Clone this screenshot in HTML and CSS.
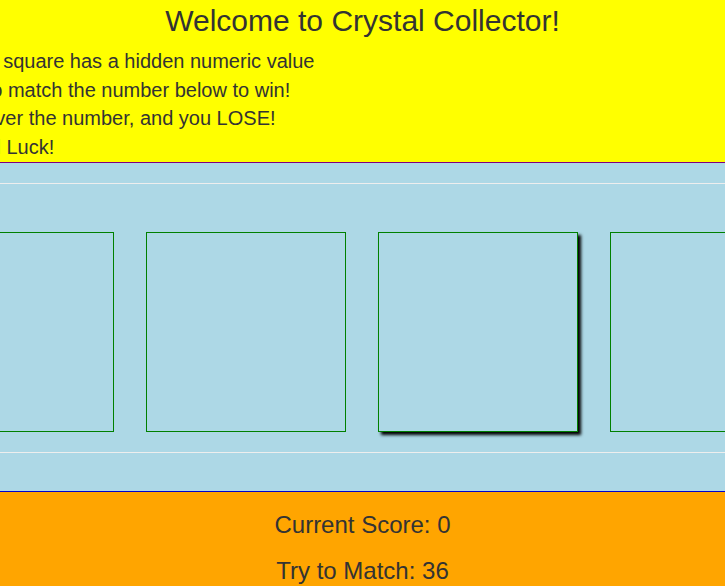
FILE: index.html
```html
<!DOCTYPE html>
<html>
<head>
<meta charset="utf-8">
<title>Crystal Collector</title>
<link rel="stylesheet" href="styles.css">
</head>
<body>
<header class="header">
  <h2 class="title">Welcome to Crystal Collector!</h2>
  <div class="intro">
    <div class="line">Each square has a hidden numeric value</div>
    <div class="line">Try to match the number below to win!</div>
    <div class="line">Go over the number, and you LOSE!</div>
    <div class="line">Good Luck!</div>
  </div>
</header>
<main class="board">
  <hr class="rule rule-top">
  <div class="crystals">
    <div class="crystal"></div>
    <div class="crystal"></div>
    <div class="crystal crystal-hover"></div>
    <div class="crystal"></div>
  </div>
  <hr class="rule rule-bottom">
</main>
<footer class="footer">
  <h3 class="stat">Current Score: 0</h3>
  <h3 class="stat">Try to Match: 36</h3>
</footer>
</body>
</html>
```

FILE: styles.css
```css
html, body {
  margin: 0;
  padding: 0;
  overflow: hidden;
}
body {
  font-family: "Liberation Sans", Arial, Helvetica, sans-serif;
  color: #333;
  font-size: 14px;
  line-height: 1.42857;
  background: #fff;
  width: 725px;
  height: 587px;
}
.header {
  background: #ffff00;
  border-bottom: 1px solid #800080;
  height: 163px;
  box-sizing: border-box;
  padding-top: 4px;
  overflow: hidden;
}
.title {
  margin: 0 0 10px;
  font-size: 30px;
  font-weight: normal;
  line-height: 33px;
  text-align: center;
}
.intro {
  margin-left: -48px;
  font-size: 20px;
  line-height: 28.57px;
}
.line {
  white-space: nowrap;
}
.board {
  background: #add8e6;
  display: flex;
  flex-direction: column;
  height: 328px;
  overflow: hidden;
}
.rule {
  border: 0;
  border-top: 1px solid #eee;
  width: 100%;
  margin: 0;
  flex: none;
}
.rule-top {
  margin-top: 20px;
  margin-bottom: 48px;
}
.rule-bottom {
  margin-top: 20px;
}
.crystals {
  display: flex;
  justify-content: center;
  gap: 32px;
  padding-right: 1px;
  flex: none;
}
.crystal {
  width: 200px;
  height: 200px;
  box-sizing: border-box;
  border: 1px solid #008000;
  flex: none;
}
.crystal-hover {
  box-shadow: 3px 3px 3px #000;
}
.footer {
  background: #ffa500;
  border-top: 1px solid #0000cd;
  height: 95px;
  box-sizing: border-box;
  padding-top: 20px;
  text-align: center;
  overflow: hidden;
}
.stat {
  margin: 0 0 20px;
  font-size: 24px;
  font-weight: normal;
  line-height: 26.4px;
}
```
